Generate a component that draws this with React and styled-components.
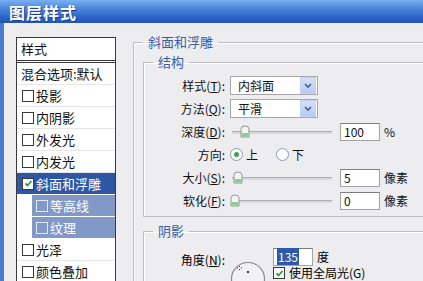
import React from "react";
import styled, { createGlobalStyle } from "styled-components";

const GlobalStyle = createGlobalStyle`
  html, body { margin: 0; padding: 0; background: #edecef; }
  body { font-family: "Noto Sans CJK SC", "Noto Sans", sans-serif; }
`;

const Window = styled.div`
  width: 423px;
  height: 281px;
  overflow: hidden;
  background: #edecef;
  display: flex;
  flex-direction: column;
`;

const TitleBar = styled.div`
  height: 23px;
  flex: none;
  background: linear-gradient(#7aaff0 0%, #4e89dd 35%, #2c63c6 75%, #2256b6 100%);
  display: flex;
  align-items: center;
  padding-left: 9px;
`;

const Title = styled.div`
  color: #fff;
  font-size: 16px;
  font-weight: bold;
  letter-spacing: 1px;
  text-shadow: 1px 1px 0 #1a3c80;
`;

const Body = styled.div`
  flex: 1;
  display: flex;
  align-items: flex-start;
  border-left: 4px solid #4a7bd0;
  padding: 11px 0 0 12px;
  overflow: hidden;
`;

const StyleList = styled.div`
  width: 98px;
  flex: none;
  margin-top: 3px;
  background: #fff;
  border: 1px solid #3a3a3a;
  border-bottom: none;
  font-size: 13px;
  color: #111;
`;

const ListHeader = styled.div`
  height: 22px;
  line-height: 22px;
  padding-left: 4px;
  border-bottom: 3px double #3a3a3a;
`;

const ListItem = styled.div`
  height: 21px;
  display: flex;
  align-items: center;
  gap: 2px;
  border-bottom: 1px solid ${(p) => (p.$tone === "plain" ? "#e6e5ea" : "#fff")};
  padding-left: ${(p) => (p.$sub || p.$bare ? "4px" : "5px")};
  margin-left: ${(p) => (p.$sub ? "15px" : "0")};
  background: ${(p) =>
    p.$tone === "active" ? "#2d57a5" : p.$tone === "sub" ? "#8299c7" : "#fff"};
  color: ${(p) => (p.$tone === "plain" ? "#111" : "#fff")};
`;

const Box = styled.span`
  width: 10px;
  height: 10px;
  flex: none;
  border: 1px solid ${(p) => (p.$light ? "#e4e8f2" : "#3a3a3a")};
  background: ${(p) => (p.$light ? "transparent" : "#fff")};
  display: flex;
  align-items: center;
  justify-content: center;
`;

const Panel = styled.div`
  margin-left: 17px;
  flex: none;
`;

const Group = styled.fieldset`
  margin: ${(p) => (p.$gap ? "6px 0 0 0" : "0")};
  padding: 4px 0 4px 9px;
  border: 1px solid #bdbcc2;
  width: ${(p) => p.$w || "auto"};
  box-shadow: inset 1px 1px 0 #fff;
`;

const Legend = styled.legend`
  padding: 0 5px;
  font-size: 13px;
  line-height: 16px;
  color: #3b5ea6;
`;

const Row = styled.div`
  height: 23px;
  display: flex;
  align-items: center;
  font-size: 12px;
  color: #111;
`;

const Label = styled.div`
  width: 72px;
  text-align: right;
  margin-right: 5px;
  flex: none;
  white-space: nowrap;
  u { text-decoration: underline; }
`;

const Select = styled.div`
  width: 88px;
  height: 19px;
  border: 1px solid #a7a6ab;
  background: #fff;
  display: flex;
  align-items: center;
  justify-content: space-between;
  padding-left: 7px;
  box-sizing: border-box;
  font-size: 12px;
`;

const DropButton = styled.div`
  width: 16px;
  height: 17px;
  margin-right: 1px;
  background: linear-gradient(#d3e0fa, #b6cbf4);
  border: 1px solid #c2d2f2;
  box-sizing: border-box;
  display: flex;
  align-items: center;
  justify-content: center;
`;

const Slider = styled.div`
  width: 100px;
  height: 14px;
  margin-left: 2px;
  position: relative;
  flex: none;
  &::before {
    content: "";
    position: absolute;
    left: 0;
    right: 0;
    top: 6px;
    height: 2px;
    background: #d9d8dc;
    border-top: 1px solid #aeadb2;
  }
`;

const Thumb = styled.svg`
  position: absolute;
  top: 0;
`;

const NumBox = styled.div`
  width: 40px;
  height: 18px;
  box-sizing: border-box;
  margin-left: ${(p) => p.$ml || "8px"};
  border: 1px solid #a3a2a7;
  border-top-color: #7e7d82;
  background: #fff;
  padding-left: 3px;
  line-height: 16px;
  font-size: 12px;
  flex: none;
`;

const Selected = styled.span`
  background: #2e58a8;
  color: #fff;
  padding: 0 1px;
`;

const Unit = styled.span`
  margin-left: 4px;
  font-size: 12px;
`;

const Radio = styled.span`
  width: 11px;
  height: 11px;
  border-radius: 50%;
  border: 1px solid #8c9bb4;
  background: #fff;
  display: inline-flex;
  align-items: center;
  justify-content: center;
  margin: ${(p) => (p.$first ? "0 3px 0 0" : "0 3px 0 18px")};
  &::after {
    content: "";
    width: 5px;
    height: 5px;
    border-radius: 50%;
    background: ${(p) => (p.$on ? "#3ba04a" : "transparent")};
  }
`;

const AngleArea = styled.div`
  display: flex;
  align-items: flex-start;
  font-size: 12px;
  height: 38px;
`;

const AngleLabel = styled(Label)`
  margin-top: 8px;
`;

const Dial = styled.svg`
  margin-top: 18px;
  flex: none;
`;

const AngleControls = styled.div`
  display: flex;
  flex-direction: column;
  margin-left: 7px;
  margin-top: 4px;
`;

const InlineRow = styled.div`
  display: flex;
  align-items: center;
  height: 19px;
`;

const CheckRow = styled.div`
  display: flex;
  align-items: center;
  gap: 4px;
  margin-top: 1px;
  font-size: 12px;
  line-height: 12px;
`;

const Check = () => (
  <svg width="9" height="9" viewBox="0 0 9 9">
    <path d="M1.5 4.5 L3.5 6.5 L7.5 2" stroke="#2f9a3d" strokeWidth="1.8" fill="none" />
  </svg>
);

const Chevron = () => (
  <DropButton>
    <svg width="8" height="6" viewBox="0 0 8 6">
      <path d="M1 1 L4 4 L7 1" stroke="#4c5f86" strokeWidth="1.6" fill="none" />
    </svg>
  </DropButton>
);

const SliderThumb = ({ at }) => (
  <Thumb width="10" height="13" viewBox="0 0 10 13" style={{ left: at }}>
    <path d="M1 4 Q1 1 5 1 Q9 1 9 4 L9 12 L1 12 Z" fill="#f4f4f4" stroke="#8e9a90" />
    <rect x="1.5" y="8" width="7" height="3.5" fill="#8ccc94" />
  </Thumb>
);

const items = [
  { text: "投影", tone: "plain" },
  { text: "内阴影", tone: "plain" },
  { text: "外发光", tone: "plain" },
  { text: "内发光", tone: "plain" },
  { text: "斜面和浮雕", tone: "active", checked: true },
  { text: "等高线", tone: "sub", sub: true },
  { text: "纹理", tone: "sub", sub: true },
  { text: "光泽", tone: "plain" },
  { text: "颜色叠加", tone: "plain" },
];

export default function App() {
  return (
    <Window>
      <GlobalStyle />
      <TitleBar>
        <Title>图层样式</Title>
      </TitleBar>
      <Body>
        <StyleList>
          <ListHeader>样式</ListHeader>
          <ListItem $tone="plain" $bare>混合选项:默认</ListItem>
          {items.map((it) => (
            <ListItem key={it.text} $tone={it.tone} $sub={it.sub}>
              <Box $light={it.sub}>{it.checked && <Check />}</Box>
              {it.text}
            </ListItem>
          ))}
        </StyleList>
        <Panel>
          <Group $w="330px">
            <Legend>斜面和浮雕</Legend>
            <Group>
              <Legend>结构</Legend>
              <Row>
                <Label>样式(<u>T</u>):</Label>
                <Select>
                  内斜面
                  <Chevron />
                </Select>
              </Row>
              <Row>
                <Label>方法(<u>Q</u>):</Label>
                <Select>
                  平滑
                  <Chevron />
                </Select>
              </Row>
              <Row>
                <Label>深度(<u>D</u>):</Label>
                <Slider>
                  <SliderThumb at={8} />
                </Slider>
                <NumBox>100</NumBox>
                <Unit>%</Unit>
              </Row>
              <Row>
                <Label>方向:</Label>
                <Radio $first $on />上
                <Radio />下
              </Row>
              <Row>
                <Label>大小(<u>S</u>):</Label>
                <Slider>
                  <SliderThumb at={1} />
                </Slider>
                <NumBox>5</NumBox>
                <Unit>像素</Unit>
              </Row>
              <Row>
                <Label>软化(<u>F</u>):</Label>
                <Slider>
                  <SliderThumb at={-2} />
                </Slider>
                <NumBox>0</NumBox>
                <Unit>像素</Unit>
              </Row>
            </Group>
            <Group $gap>
              <Legend>阴影</Legend>
              <AngleArea>
                <AngleLabel>角度(<u>N</u>):</AngleLabel>
                <Dial width="36" height="36" viewBox="0 0 36 36">
                  <circle cx="18" cy="18" r="16.5" fill="#f2f2f4" stroke="#8a8a90" strokeWidth="1.2" />
                  <g fill="#333">
                    <rect x="9" y="5" width="1" height="1" />
                    <rect x="9" y="8" width="1" height="1" />
                    <rect x="7" y="6.5" width="1" height="1" />
                    <rect x="11" y="6.5" width="1" height="1" />
                    <rect x="17" y="10" width="2" height="2" />
                  </g>
                </Dial>
                <AngleControls>
                  <InlineRow>
                    <NumBox $ml="0px">
                      <Selected>135</Selected>
                    </NumBox>
                    <Unit>度</Unit>
                  </InlineRow>
                  <CheckRow>
                    <Box>
                      <Check />
                    </Box>
                    使用全局光(G)
                  </CheckRow>
                </AngleControls>
              </AngleArea>
            </Group>
          </Group>
        </Panel>
      </Body>
    </Window>
  );
}
